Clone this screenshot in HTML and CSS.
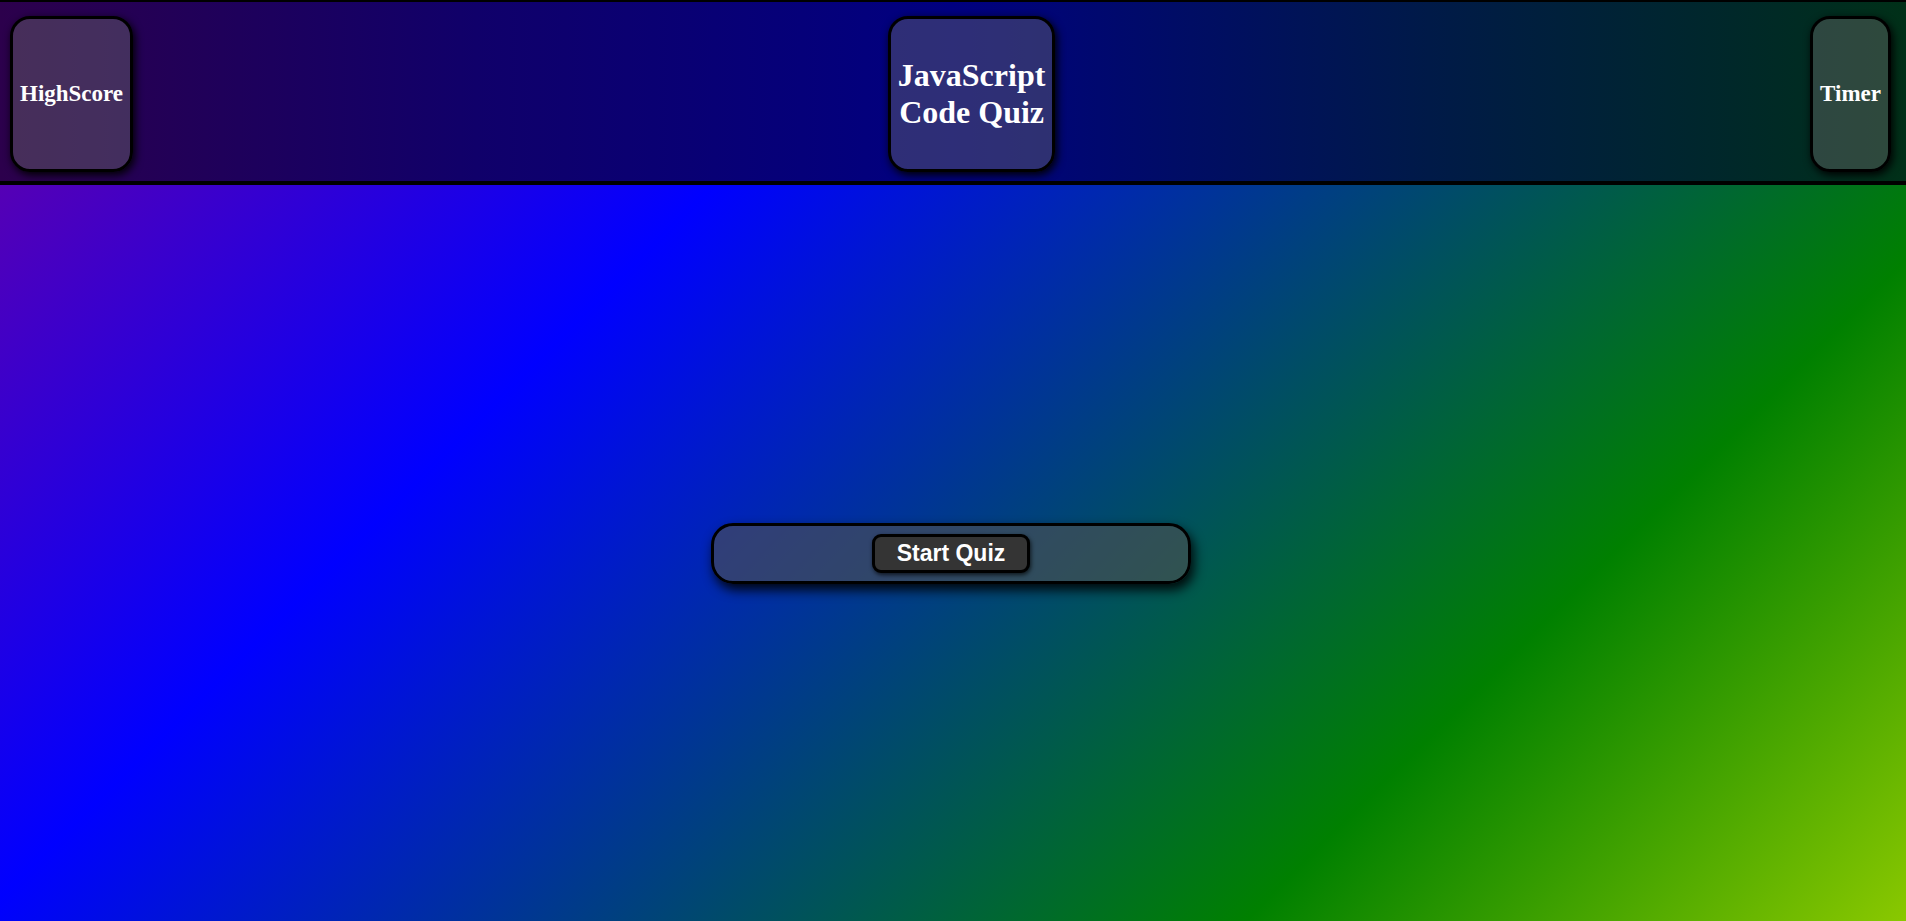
FILE: index.html
```html
<!DOCTYPE html>
<html lang="en">
<head>
<meta charset="utf-8">
<title>JavaScript Code Quiz</title>
<link rel="stylesheet" href="styles.css">
</head>
<body>
  <header class="topbar">
    <div class="card card-score"><h2 class="card-label">HighScore</h2></div>
    <div class="card card-title"><h1 class="title">JavaScript<br>Code Quiz</h1></div>
    <div class="card card-timer"><h2 class="card-label">Timer</h2></div>
  </header>
  <main class="stage">
    <div class="start-panel">
      <button class="start-btn" type="button">Start Quiz</button>
    </div>
  </main>
</body>
</html>
```

FILE: styles.css
```css
html, body {
  margin: 0;
  padding: 0;
  height: 100%;
}

body {
  display: flex;
  flex-direction: column;
  font-family: "Liberation Serif", "Times New Roman", serif;
  color: #fff;
  overflow: hidden;
}

.topbar {
  display: flex;
  justify-content: space-between;
  align-items: stretch;
  padding: 14px 15px 9px 10px;
  border-top: 2px solid #000;
  border-bottom: 4px solid #000;
  background: linear-gradient(to right, #2c004c 0%, #10006a 25%, #000080 50%, #001a48 75%, #003018 100%);
}

.card {
  display: flex;
  align-items: center;
  justify-content: center;
  height: 150px;
  padding: 0 7px;
  border: 3px solid #000;
  border-radius: 20px;
  background: rgba(110, 110, 110, 0.42);
  box-shadow: 2px 3px 8px #000;
}

.card-label {
  margin: 0;
  font-size: 23px;
  font-weight: bold;
}

.title {
  margin: 0;
  font-size: 32px;
  font-weight: bold;
  line-height: 1.15;
  text-align: center;
}

.stage {
  flex: 1;
  display: flex;
  align-items: center;
  justify-content: center;
  background: linear-gradient(135deg, #5500b5 0%, #0000ff 27%, #008000 75%, #8ac800 100%);
}

.start-panel {
  display: flex;
  align-items: center;
  justify-content: center;
  width: 474px;
  height: 55px;
  margin-right: 4px;
  border: 3px solid #000;
  border-radius: 22px;
  background: rgba(80, 80, 80, 0.6);
  box-shadow: 3px 6px 12px rgba(0, 0, 0, 0.9);
}

.start-btn {
  height: 39px;
  padding: 0 22px;
  border: 3px solid #000;
  border-radius: 9px;
  background: #343434;
  color: #fff;
  font-family: "Liberation Sans", Arial, sans-serif;
  font-size: 23px;
  font-weight: bold;
  box-shadow: 1px 2px 4px rgba(0, 0, 0, 0.7);
  cursor: pointer;
}
```
